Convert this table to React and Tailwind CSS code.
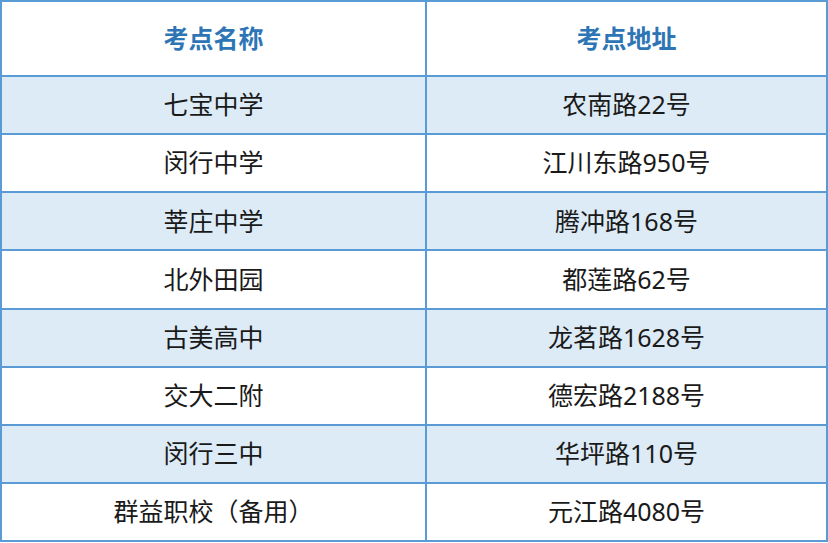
const ROWS = [
  ['七宝中学', '农南路22号'],
  ['闵行中学', '江川东路950号'],
  ['莘庄中学', '腾冲路168号'],
  ['北外田园', '都莲路62号'],
  ['古美高中', '龙茗路1628号'],
  ['交大二附', '德宏路2188号'],
  ['闵行三中', '华坪路110号'],
  ['群益职校（备用）', '元江路4080号'],
];

export default function App() {
  return (
    <div
      className="w-[828px] h-[543px] bg-white text-[25px] text-[#1a1a1a]"
      style={{ fontFamily: '"Noto Sans", "Noto Sans CJK SC", sans-serif' }}
    >
      <div className="h-[542px] border-2 border-[#5b9bd5] flex flex-col">
        <div className="grid grid-cols-[425px_1fr] h-[75px] border-b-2 border-[#5b9bd5] font-bold text-[#2e75b6]">
          <div className="flex items-center justify-center border-r-2 border-[#5b9bd5]">考点名称</div>
          <div className="flex items-center justify-center">考点地址</div>
        </div>
        {ROWS.map(([name, addr], i) => (
          <div
            key={i}
            className={`grid grid-cols-[425px_1fr] flex-1 ${i < ROWS.length - 1 ? 'border-b-2 border-[#5b9bd5]' : ''} ${i % 2 === 0 ? 'bg-[#ddebf7]' : 'bg-white'}`}
          >
            <div className="flex items-center justify-center border-r-2 border-[#5b9bd5]">{name}</div>
            <div className="flex items-center justify-center">{addr}</div>
          </div>
        ))}
      </div>
    </div>
  );
}
